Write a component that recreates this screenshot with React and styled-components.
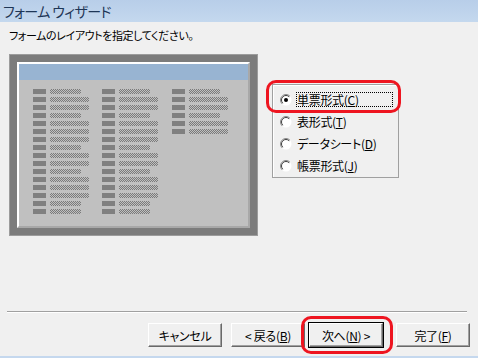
import React from "react";
import styled, { createGlobalStyle } from "styled-components";

const Global = createGlobalStyle`
  html, body { margin: 0; padding: 0; background: #f0f0f0; }
  body { font-family: "Noto Sans CJK JP", "Noto Sans", sans-serif; font-feature-settings: "palt" 1; }
  #root { width: 478px; height: 358px; overflow: hidden; }
`;

const Window = styled.div`
  width: 478px;
  height: 358px;
  background: #f0f0f0;
  display: flex;
  flex-direction: column;
  color: #000;
  font-size: 12px;
`;

const TitleBar = styled.div`
  height: 22px;
  flex: none;
  background: linear-gradient(#b8cee9, #c4d8ee);
  display: flex;
  align-items: center;
  padding-left: 3px;
`;

const TitleText = styled.span`
  font-size: 14px;
  letter-spacing: -0.6px;
  color: #1e3656;
  line-height: 1;
  margin-top: -1px;
`;

const Body = styled.div`
  height: 289px;
  flex: none;
  padding: 5px 0 0 9px;
  box-sizing: border-box;
  display: flex;
  flex-direction: column;
`;

const Instruction = styled.div`
  height: 16px;
  line-height: 16px;
  font-size: 11px;
  letter-spacing: -0.4px;
`;

const Main = styled.div`
  margin-top: 11px;
  display: flex;
  align-items: flex-start;
`;

const Preview = styled.div`
  width: 249px;
  height: 182px;
  box-sizing: border-box;
  border: 1px solid #9c9c9c;
  background: #7c7c7c;
  padding: 7px;
`;

const Sheet = styled.div`
  height: 100%;
  box-sizing: border-box;
  border-top: 2px solid #ffffff;
  border-left: 2px solid #ffffff;
  border-right: 2px solid #a8a8a8;
  border-bottom: 2px solid #a8a8a8;
  background: #c0c0c0;
  display: flex;
  flex-direction: column;
`;

const SheetHeader = styled.div`
  height: 16px;
  background: #98b4d2;
  flex: none;
`;

const Columns = styled.div`
  display: grid;
  grid-template-columns: 69px 70px auto;
  padding: 9px 0 0 14px;
`;

const Column = styled.div`
  display: flex;
  flex-direction: column;
  gap: 3px;
`;

const FieldRow = styled.div`
  display: flex;
  gap: 4px;
  height: 5px;
`;

const FieldLabel = styled.div`
  width: 13px;
  height: 5px;
  background: #808080;
`;

const FieldBox = styled.div`
  width: ${(p) => (p.$long ? 39 : 31)}px;
  height: 5px;
  background: repeating-conic-gradient(#7a7a7a 0 25%, #c0c0c0 0 50%) 0 0 / 2px 2px;
`;

const OptionGroup = styled.div`
  position: relative;
  margin: 30px 0 0 14px;
  width: 127px;
  height: 94px;
  box-sizing: border-box;
  border: 1px solid #a0a0a0;
  box-shadow: inset 1px 1px 0 #ffffff;
  padding: 7px 0 0 7px;
  display: flex;
  flex-direction: column;
  gap: 7px;
`;

const OptionRow = styled.label`
  display: flex;
  align-items: center;
  height: 15px;
  gap: 4px;
`;

const OptionLabel = styled.span`
  height: 15px;
  line-height: 15px;
  padding: 0 1px;
  box-sizing: border-box;
  width: ${(p) => (p.$focus ? "97px" : "auto")};
  outline: ${(p) => (p.$focus ? "1px dotted #000" : "none")};
  outline-offset: -1px;
  font-size: 12px;
  letter-spacing: -0.3px;
`;

const Key = styled.span`
  text-decoration: underline;
  text-underline-offset: 1px;
`;

const Highlight = styled.div`
  position: absolute;
  border: 3px solid #ee1520;
  border-radius: 10px;
  pointer-events: none;
  left: ${(p) => p.$l}px;
  top: ${(p) => p.$t}px;
  right: ${(p) => p.$r}px;
  bottom: ${(p) => p.$b}px;
`;

const RadioHighlight = styled(Highlight)`
  bottom: auto;
  height: 33px;
  box-sizing: border-box;
`;

const Footer = styled.div`
  flex: none;
  display: flex;
  flex-direction: column;
`;

const Separator = styled.div`
  margin: 0 11px 0 7px;
  height: 1px;
  background: #a0a0a0;
  border-bottom: 1px solid #ffffff;
`;

const ButtonRow = styled.div`
  display: flex;
  padding: 10px 0 0 148px;
  height: 24px;
`;

const ButtonWrap = styled.div`
  position: relative;
  margin-left: ${(p) => p.$gap || 0}px;
`;

const Button = styled.button`
  width: 74px;
  height: 24px;
  box-sizing: border-box;
  background: #f0f0f0;
  font-family: inherit;
  font-size: 12px;
  letter-spacing: -0.3px;
  color: #000;
  padding: 0;
  border: 1px solid;
  border-color: #ffffff #696969 #696969 #ffffff;
  box-shadow: ${(p) =>
    p.$default
      ? "0 0 0 1px #000, inset -1px -1px 0 #a0a0a0"
      : "inset -1px -1px 0 #a0a0a0"};
  display: flex;
  align-items: center;
  justify-content: center;
  font-feature-settings: "palt" 1;
`;

const BottomEdge = styled.div`
  margin-top: auto;
  height: 2px;
  background: #c5d8ee;
`;

function Radio({ checked }) {
  return (
    <svg width="12" height="12" viewBox="0 0 12 12">
      <circle cx="6" cy="6" r="5.5" fill="#ffffff" />
      <path d="M 2.1 9.9 A 5.5 5.5 0 0 1 9.9 2.1" fill="none" stroke="#8a8a8a" strokeWidth="1" />
      <path d="M 2.8 9.2 A 4.5 4.5 0 0 1 9.2 2.8" fill="none" stroke="#404040" strokeWidth="1" />
      {checked && <circle cx="6" cy="6" r="2" fill="#000" />}
    </svg>
  );
}

const col12 = [0, 1, 1, 0, 1, 1, 1, 0, 1, 1, 0, 1, 1, 1, 0, 0];
const col3 = [0, 1, 1, 0, 1, 1];

function FieldColumn({ rows }) {
  return (
    <Column>
      {rows.map((l, i) => (
        <FieldRow key={i}>
          <FieldLabel />
          <FieldBox $long={!!l} />
        </FieldRow>
      ))}
    </Column>
  );
}

const options = [
  { text: "単票形式(", key: "C", checked: true },
  { text: "表形式(", key: "T" },
  { text: "データシート(", key: "D" },
  { text: "帳票形式(", key: "J" },
];

export default function App() {
  return (
    <>
      <Global />
      <Window>
        <TitleBar>
          <TitleText>フォーム ウィザード</TitleText>
        </TitleBar>
        <Body>
          <Instruction>フォームのレイアウトを指定してください。</Instruction>
          <Main>
            <Preview>
              <Sheet>
                <SheetHeader />
                <Columns>
                  <FieldColumn rows={col12} />
                  <FieldColumn rows={col12} />
                  <FieldColumn rows={col3} />
                </Columns>
              </Sheet>
            </Preview>
            <OptionGroup>
              {options.map((o) => (
                <OptionRow key={o.key}>
                  <Radio checked={o.checked} />
                  <OptionLabel $focus={o.checked}>
                    {o.text}
                    <Key>{o.key}</Key>)
                  </OptionLabel>
                </OptionRow>
              ))}
              <RadioHighlight $l={-7} $t={-5} $r={-3} />
            </OptionGroup>
          </Main>
        </Body>
        <Footer>
          <Separator />
          <ButtonRow>
            <ButtonWrap>
              <Button>キャンセル</Button>
            </ButtonWrap>
            <ButtonWrap $gap={9}>
              <Button>
                &lt; 戻る(<Key>B</Key>)
              </Button>
            </ButtonWrap>
            <ButtonWrap $gap={4}>
              <Button $default>
                次へ(<Key>N</Key>) &gt;
              </Button>
              <Highlight $l={-8} $t={-7} $r={-10} $b={-7} />
            </ButtonWrap>
            <ButtonWrap $gap={13}>
              <Button>
                完了(<Key>F</Key>)
              </Button>
            </ButtonWrap>
          </ButtonRow>
        </Footer>
        <BottomEdge />
      </Window>
    </>
  );
}
